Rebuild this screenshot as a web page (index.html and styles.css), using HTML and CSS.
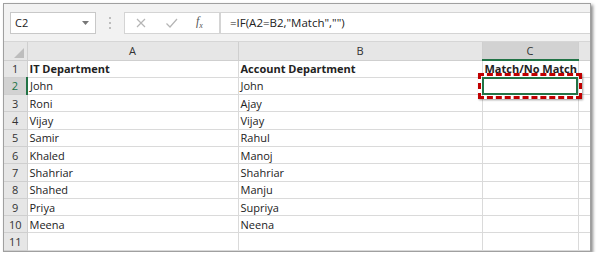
FILE: index.html
```html
<!DOCTYPE html>
<html lang="en">
<head>
    <meta charset="UTF-8">
    <title>IF match</title>
    <link rel="stylesheet" href="styles.css">
</head>
<body>
    <div class="frame">
        <div class="toolbar">
            <div class="namebox">
                <span>C2</span>
                <svg class="arrow" width="7" height="4" viewBox="0 0 7 4"><path d="M0 0h7L3.5 4z" fill="#777"/></svg>
            </div>
            <div class="dots"><i></i><i></i><i></i></div>
            <div class="buttons">
                <svg width="12" height="12" viewBox="0 0 12 12"><path d="M2 2l8 8M10 2l-8 8" stroke="#b5b5b5" stroke-width="1.2"/></svg>
                <svg width="13" height="12" viewBox="0 0 13 12"><path d="M1.5 6.5l3.5 3.5 7-8" stroke="#b5b5b5" stroke-width="1.2" fill="none"/></svg>
                <span class="fx">f<sub>x</sub></span>
            </div>
            <div class="formula">=IF(A2=B2,"Match","")</div>
        </div>
        <table class="sheet">
            <thead>
                <tr>
                    <th class="corner"><svg width="10" height="10" viewBox="0 0 10 10"><path d="M10 0v10H0z" fill="#bdbdbd"/></svg></th>
                    <th class="col-a">A</th>
                    <th class="col-b">B</th>
                    <th class="col-c active">C</th>
                    <th class="col-d"></th>
                </tr>
            </thead>
            <tbody>
                <tr><th>1</th><td class="bold">IT Department</td><td class="bold">Account Department</td><td class="bold center">Match/No Match</td><td></td></tr>
                <tr class="current"><th>2</th><td>John</td><td>John</td><td class="selected"><span class="mark"></span></td><td></td></tr>
                <tr><th>3</th><td>Roni</td><td>Ajay</td><td></td><td></td></tr>
                <tr><th>4</th><td>Vijay</td><td>Vijay</td><td></td><td></td></tr>
                <tr><th>5</th><td>Samir</td><td>Rahul</td><td></td><td></td></tr>
                <tr><th>6</th><td>Khaled</td><td>Manoj</td><td></td><td></td></tr>
                <tr><th>7</th><td>Shahriar</td><td>Shahriar</td><td></td><td></td></tr>
                <tr><th>8</th><td>Shahed</td><td>Manju</td><td></td><td></td></tr>
                <tr><th>9</th><td>Priya</td><td>Supriya</td><td></td><td></td></tr>
                <tr><th>10</th><td>Meena</td><td>Neena</td><td></td><td></td></tr>
                <tr><th>11</th><td></td><td></td><td></td><td></td></tr>
            </tbody>
        </table>
    </div>
</body>
</html>
```
FILE: styles.css
```css
body{
    margin: 0;
    background: #fff;
    font-family: "Open Sans", "Liberation Sans", sans-serif;
    color: #222;
}
.frame{
    margin: 3px 0 0 3px;
    width: 586px;
    border: 1px solid #a0a0a0;
    box-shadow: 2px 2px 3px rgba(0,0,0,0.45);
    background: #fff;
    overflow: hidden;
}
.toolbar{
    height: 37px;
    background: #f2f2f2;
    display: flex;
    align-items: center;
    padding: 0 0 0 6px;
    border-bottom: 1px solid #d6d6d6;
}
.namebox{
    width: 86px;
    height: 22px;
    background: #fff;
    border: 1px solid #c8c8c8;
    display: flex;
    align-items: center;
    justify-content: space-between;
    padding: 0 6px 0 4px;
    box-sizing: border-box;
    font-size: 11px;
}
.dots{
    width: 28px;
    display: flex;
    flex-direction: column;
    align-items: center;
    gap: 3px;
}
.dots i{
    width: 2px;
    height: 2px;
    background: #bdbdbd;
}
.buttons{
    width: 96px;
    height: 22px;
    background: #fff;
    border: 1px solid #d4d4d4;
    box-sizing: border-box;
    display: flex;
    align-items: center;
    gap: 18px;
    padding-left: 10px;
}
.fx{
    font-family: "Liberation Serif", serif;
    font-style: italic;
    font-size: 12px;
    color: #555;
}
.fx sub{
    font-size: 8px;
}
.formula{
    flex: 1;
    height: 22px;
    background: #fff;
    border: 1px solid #d4d4d4;
    border-right: none;
    box-sizing: border-box;
    font-size: 11.5px;
    line-height: 20px;
    padding-left: 9px;
}
.sheet{
    border-collapse: collapse;
    table-layout: fixed;
    width: 586px;
    font-size: 11px;
}
.sheet th, .sheet td{
    height: 17.3px;
    padding: 0 2px;
    border: 1px solid #dadada;
    box-sizing: border-box;
    white-space: nowrap;
    overflow: visible;
}
.sheet tr > :first-child{
    border-left: none;
}
.sheet tr > :last-child{
    border-right: none;
}
.sheet thead th{
    height: 18px;
    background: #e6e6e6;
    font-weight: normal;
    color: #333;
    border-color: #cfcfcf;
    border-top: none;
}
.sheet tbody th{
    background: #e6e6e6;
    font-weight: normal;
    color: #333;
    text-align: center;
    border-color: #cfcfcf;
    width: 23px;
}
.corner{
    width: 23px;
    text-align: right;
    vertical-align: bottom;
}
.corner svg{
    display: block;
    margin: 0 1px 2px auto;
}
.col-a{ width: 211px; }
.col-b{ width: 244px; }
.col-c{ width: 96px; }
.sheet thead th.active{
    background: #d2d2d2;
    border-bottom: 2px solid #217346;
}
.sheet tr.current th{
    background: #d2d2d2;
    color: #217346;
    border-right: 2px solid #217346;
}
.bold{
    font-weight: bold;
}
.center{
    text-align: center;
}
.selected{
    position: relative;
    outline: 2px solid #217346;
    outline-offset: -2px;
}
.mark{
    position: absolute;
    left: -5px;
    top: -5px;
    right: -4px;
    bottom: -5px;
    border: 3px dashed #c00000;
    box-shadow: 1px 1px 2px rgba(0,0,0,0.4);
}
```
